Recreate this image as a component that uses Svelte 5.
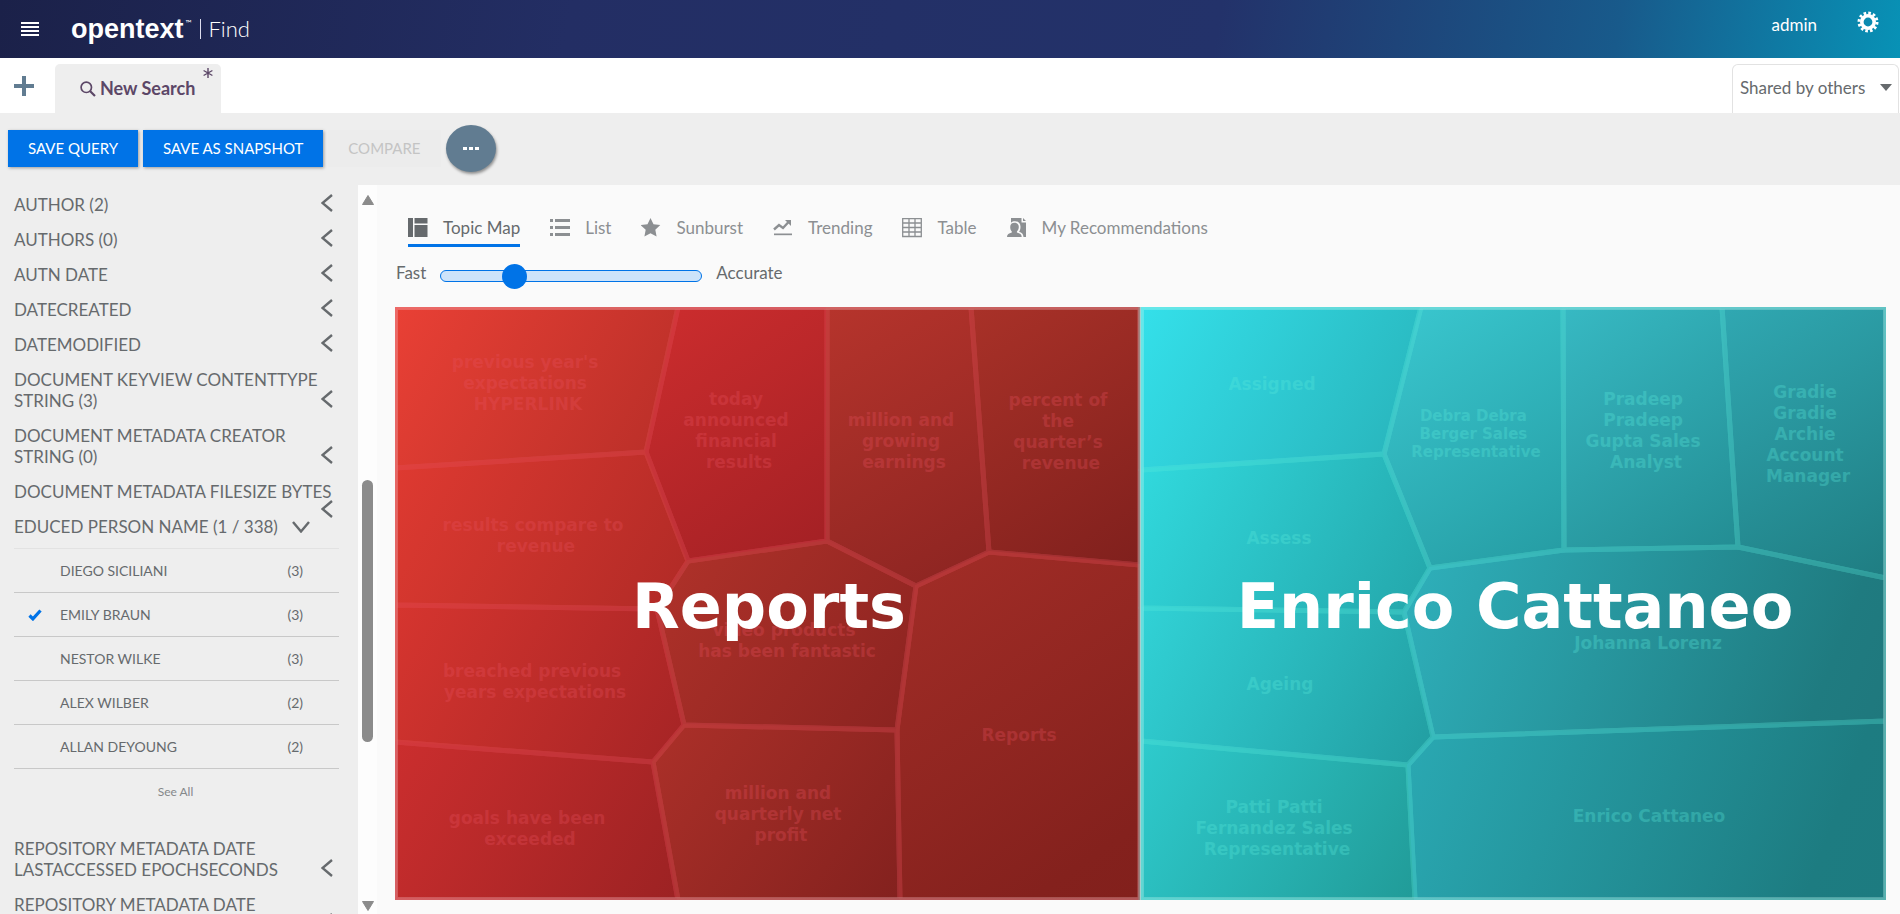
<script>
  const facets = [
    { lines: ['AUTHOR (2)'] },
    { lines: ['AUTHORS (0)'] },
    { lines: ['AUTN DATE'] },
    { lines: ['DATECREATED'] },
    { lines: ['DATEMODIFIED'] },
    { lines: ['DOCUMENT KEYVIEW CONTENTTYPE', 'STRING (3)'] },
    { lines: ['DOCUMENT METADATA CREATOR', 'STRING (0)'] },
    { lines: ['DOCUMENT METADATA FILESIZE BYTES'], dropped: true }
  ];
  const people = [
    { name: 'DIEGO SICILIANI', count: 3 },
    { name: 'EMILY BRAUN', count: 3, on: true },
    { name: 'NESTOR WILKE', count: 3 },
    { name: 'ALEX WILBER', count: 2 },
    { name: 'ALLAN DEYOUNG', count: 2 }
  ];
  const moreFacets = [
    { lines: ['REPOSITORY METADATA DATE', 'LASTACCESSED EPOCHSECONDS'] },
    { lines: ['REPOSITORY METADATA DATE'], dropped: true }
  ];
  const views = ['Topic Map', 'List', 'Sunburst', 'Trending', 'Table', 'My Recommendations'];
  let active = $state('Topic Map');
  let speed = $state(26);

  // Topic map clusters: polygon points and label anchors share one canvas.
  const clusters = [
    {
      title: 'Reports', x: 374, frame: [1.5, 742.5], tint: '#e8505e',
      cells: [
        { p: '0,0 283,0 251,145 0,161', c: ['#e94035', '#b72e28'], x: 133, y: 61, t: ["previous year's", 'expectations', 'HYPERLINK'] },
        { p: '0,161 251,145 293,254 262,302 0,298', c: ['#df3a31', '#b02a26'], x: 141, y: 224, t: ['results compare to', 'revenue'] },
        { p: '0,298 262,302 289,418 258,455 0,435', c: ['#d6352f', '#a52425'], x: 140, y: 370, t: ['breached previous', 'years expectations'] },
        { p: '0,435 258,455 283,593 0,593', c: ['#cb2e2e', '#9c2223'], x: 135, y: 517, t: ['goals have been', 'exceeded'] },
        { p: '283,0 432,0 432,234 293,254 251,145', c: ['#cd2d2e', '#a22024'], x: 344, y: 98, t: ['today', 'announced', 'financial', 'results'] },
        { p: '432,0 576,0 594,245 521,279 432,234', c: ['#b6342c', '#8b2421'], x: 509, y: 119, t: ['million and', 'growing', 'earnings'] },
        { p: '576,0 745,0 745,258 594,245', c: ['#a93128', '#80201d'], x: 666, y: 99, t: ['percent of', 'the', 'quarter’s', 'revenue'] },
        { p: '293,254 432,234 521,279 502,423 289,418 262,302', c: ['#b1322a', '#8a2320'], x: 392, y: 329, t: ['video products', 'has been fantastic'] },
        { p: '289,418 502,423 505,593 283,593 258,455', c: ['#ac3029', '#83211e'], x: 386, y: 492, t: ['million and', 'quarterly net', 'profit'] },
        { p: '594,245 745,258 745,593 505,593 502,423 521,279', c: ['#a32d27', '#84211d', '#82201c'], x: 624, y: 434, t: ['Reports'] }
      ]
    },
    {
      title: 'Enrico Cattaneo', x: 1120, frame: [747.5, 742], tint: '#5aebdc',
      cells: [
        { p: '746,0 1026,0 989,147 746,163', c: ['#34e0ea', '#28b2b9'], x: 877, y: 83, t: ['Assigned'] },
        { p: '746,163 989,147 1035,261 1009,305 746,301', c: ['#31dade', '#24a6aa'], x: 884, y: 237, t: ['Assess'] },
        { p: '746,301 1009,305 1038,430 1013,458 746,434', c: ['#31d2d6', '#229da1'], x: 885, y: 383, t: ['Ageing'] },
        { p: '746,434 1013,458 1020,593 746,593', c: ['#2ecbcd', '#219b98'], x: 882, y: 506, t: ['Patti Patti', 'Fernandez Sales', 'Representative'] },
        { p: '1026,0 1168,0 1169,243 1035,261 989,147', c: ['#3ac8d0', '#259ba2'], x: 1081, y: 114, small: true, t: ['Debra Debra', 'Berger Sales', 'Representative'] },
        { p: '1168,0 1327,0 1343,240 1169,243', c: ['#37b9c3', '#238d93'], x: 1251, y: 98, t: ['Pradeep', 'Pradeep', 'Gupta Sales', 'Analyst'] },
        { p: '1327,0 1491,0 1491,271 1343,240', c: ['#30a8b2', '#1f7d82'], x: 1413, y: 91, t: ['Gradie', 'Gradie', 'Archie', 'Account', 'Manager'] },
        { p: '1035,261 1169,243 1343,240 1491,271 1491,414 1038,430 1009,305', c: ['#2fb1bc', '#1f7b80', '#1f787d'], x: 1253, y: 342, t: ['Johanna Lorenz'] },
        { p: '1038,430 1491,414 1491,593 1020,593 1013,458', c: ['#2aa9b3', '#1d7c81', '#1d7b80'], x: 1254, y: 515, t: ['Enrico Cattaneo'] }
      ]
    }
  ];

  // Gradients run from the top-left to the bottom-right corner of each cell's bounds.
  function bounds(points) {
    const xy = points.split(' ').map((q) => q.split(',').map(Number));
    const xs = xy.map((q) => q[0]);
    const ys = xy.map((q) => q[1]);
    return { x1: Math.min(...xs), y1: Math.min(...ys), x2: Math.max(...xs), y2: Math.max(...ys) };
  }
  const offset = (n, total) => (total === 3 ? [0, 0.85, 1][n] : n);
</script>

{#snippet facet(f)}
  <button class="facet" class:dropped={f.dropped}>
    <span>{#each f.lines as l, i}{#if i}<br />{/if}{l}{/each}</span>
    <svg class="chev" viewBox="0 0 12 18" aria-hidden="true"><path d="M11 1 1.5 9 11 17" /></svg>
  </button>
{/snippet}

<div class="app">
  <header>
    <button class="burger" aria-label="Menu">
      <svg viewBox="0 0 18 14" width="18" height="14"><path d="M0 1h18M0 5h18M0 9h18M0 13h18" stroke="#fff" stroke-width="2" /></svg>
    </button>
    <div class="brand"><b>opentext</b><sup>™</sup><i></i><span>Find</span></div>
    <a class="user" href="#admin">admin</a>
    <button class="gear" aria-label="Settings">
      <svg viewBox="-11 -11 22 22" width="22" height="22">
        <circle r="6.2" fill="none" stroke="#fff" stroke-width="3.6" />
        <circle r="9" fill="none" stroke="#fff" stroke-width="3" stroke-dasharray="2.6 2.112" />
      </svg>
    </button>
  </header>

  <div class="tabs">
    <button class="plus" aria-label="New tab"><svg viewBox="0 0 20 20" width="20" height="20"><path d="M10 0v20M0 10h20" stroke="#617c91" stroke-width="4" /></svg></button>
    <button class="tab">
      <svg viewBox="0 0 16 16" width="16" height="16"><g fill="none" stroke="#5c4767"><circle cx="6.3" cy="6.3" r="5.2" stroke-width="1.7" /><path d="m10 10 5 5" stroke-width="2.2" /></g></svg>
      New Search
      <svg class="star" viewBox="0 0 10 10" width="10" height="10"><path d="M5 0v10M.6 2.5l8.8 5M9.4 2.5l-8.8 5" stroke="#5c4767" stroke-width="1.4" /></svg>
    </button>
    <div class="shared">
      <select aria-label="Shared searches"><option>Shared by others</option></select>
      <svg viewBox="0 0 12 7" width="12" height="7"><path d="M0 0h12L6 7z" fill="#666a6d" /></svg>
    </div>
  </div>

  <div class="toolbar">
    <button class="primary">SAVE QUERY</button>
    <button class="primary">SAVE AS SNAPSHOT</button>
    <button class="muted" disabled>COMPARE</button>
    <button class="more" aria-label="More"><svg viewBox="0 0 16 4" width="16" height="4"><path d="M0 0h4v3H0zM6 0h4v3H6zM12 0h4v3h-4z" fill="#fff" /></svg></button>
  </div>

  <div class="body">
    <aside>
      {#each facets as f}{@render facet(f)}{/each}
      <button class="facet open">
        <span>EDUCED PERSON NAME (1 / 338)</span>
        <svg viewBox="0 0 18 12" width="18" height="12"><path d="m1 1 8 9.5L17 1" /></svg>
      </button>
      <ul>
        {#each people as p}
          <li>
            <button>
              <span class="tick">{#if p.on}<svg viewBox="0 0 14 12" width="14" height="12"><path d="m1.5 6.500 3.400 3.400L12.500 1.500" fill="none" stroke="#0073e7" stroke-width="3.200" /></svg>{/if}</span>
              <span class="name">{p.name}</span>
              <span class="count">({p.count})</span>
            </button>
          </li>
        {/each}
      </ul>
      <button class="see">See All</button>
      {#each moreFacets as f}{@render facet(f)}{/each}
    </aside>

    <div class="scroll" aria-hidden="true">
      <svg viewBox="0 0 12 10" width="12" height="10"><path d="M6 .5 11.5 9.500h-11z" fill="#8b8b8b" stroke="#8b8b8b" stroke-linejoin="round" /></svg>
      <div class="track"><div class="thumb"></div></div>
      <svg viewBox="0 0 12 10" width="12" height="10"><path d="M6 9.500 11.500 .5h-11z" fill="#8b8b8b" stroke="#8b8b8b" stroke-linejoin="round" /></svg>
    </div>

    <main>
      <nav>
        {#each views as v}
          <button class:active={active === v} onclick={() => (active = v)}>
            <svg viewBox="0 0 20 20" width="20" height="20" fill="currentColor" aria-hidden="true">
              {#if v === 'Topic Map'}
                <path d="M0 0h5v19H0zM6.500 0H19.500v5.500H6.500zM6.500 7H19.500v12H6.500z" />
              {:else if v === 'List'}
                <path d="M0 1h3v3H0zM5 1h15v3H5zM0 8h3v3H0zM5 8h15v3H5zM0 15h3v3H0zM5 15h15v3H5z" />
              {:else if v === 'Sunburst'}
                <path d="m9.500 0 3 6.200 6.800.9-5 4.700 1.300 6.700-6.100-3.300-6.100 3.300 1.300-6.700-5-4.700 6.800-.9z" />
              {:else if v === 'Trending'}
                <path d="M1 15.500h18v1.700H1z" /><path d="m1 11.500 5-4.500 4 3 6-6.500" fill="none" stroke="currentColor" stroke-width="2.400" /><path d="M12 2h6v6z" />
              {:else if v === 'Table'}
                <path d="M.7.7h18.600v17.800H.7zM.7 5h18.600M.7 9.500h18.600M.7 14h18.600M7 .7v17.800M13 .7v17.800" fill="none" stroke="currentColor" stroke-width="1.300" />
              {:else}
                <path d="M4 0h10.500v4.500h4.500V19h-2.500c-.2-3-1.700-4.400-4.400-5.300 1-1.400 1.400-3 1.400-5C13.500 5.500 11.300 3.300 8 3.300c-1.600 0-3 .5-4 1.400zM16 0l3 3h-3z" />
                <path d="M7.500 4.800c2.700 0 4.300 1.600 4.300 4.100 0 1.900-.7 3.400-1.900 4.500v1.100c3 .8 4.800 1.700 4.800 4.500H0c0-2.800 1.800-3.700 4.800-4.500v-1.100c-1.200-1.100-1.600-2.600-1.600-4.500 0-2.500 1.600-4.100 4.300-4.100z" />
              {/if}
            </svg>
            {v}
          </button>
        {/each}
      </nav>

      <div class="speed">
        <label for="speed">Fast</label>
        <input id="speed" type="range" min="0" max="100" bind:value={speed} />
        <span>Accurate</span>
      </div>

      <svg class="map" viewBox="0 0 1491 593" role="img" aria-label="Topic map">
        {#each clusters as k, i}
          <defs>
            {#each k.cells as cell, j}
              <linearGradient id="g{i}-{j}" gradientUnits="userSpaceOnUse" {...bounds(cell.p)}>
                {#each cell.c as s, n}
                  <stop offset={offset(n, cell.c.length)} stop-color={s} />
                {/each}
              </linearGradient>
            {/each}
          </defs>
          {#each k.cells as cell, j}
            <polygon points={cell.p} fill="url(#g{i}-{j})" stroke="url(#g{i}-{j})" stroke-width="2" />
          {/each}
          <g opacity=".3">
            {#each k.cells as cell}
              <polygon points={cell.p} fill="none" stroke={k.tint} stroke-width="5" stroke-linejoin="round" />
              <text class="cell" class:small={cell.small} fill={k.tint}>
                {#each cell.t as line, n}
                  <tspan x={cell.x} y={cell.y + n * (cell.small ? 18 : 21)}>{line}{n < cell.t.length - 1 ? '\u00a0' : ''}</tspan>
                {/each}
              </text>
            {/each}
          </g>
          <rect x={k.frame[0]} y="1.500" width={k.frame[1]} height="590" fill="none" stroke="#fff" stroke-opacity=".2" stroke-width="3" />
        {/each}
        <path d="M745.500 0v593" stroke="#a9cfcf" stroke-width="1" />
        {#each clusters as k}
          <text class="title" x={k.x} y="321">{k.title}</text>
        {/each}
      </svg>
    </main>
  </div>
</div>

<style>
  :global(body) { overflow: hidden; }
  .app { height: 100vh; display: flex; flex-direction: column; background: #fafafa; color: #666a6d; font: 17px/21px Lato, "Open Sans", sans-serif; }
  button { font: inherit; color: inherit; background: none; border: 0; padding: 0; margin: 0; cursor: pointer; text-align: left; }
  svg { display: block; flex: none; }

  header { flex: none; height: 58px; display: flex; align-items: center; padding: 0 21px; color: #fff; background: linear-gradient(100deg, #1b2149 0%, #232e64 30%, #23326a 64%, #185a8b 85%, #0892b6 100%); }
  .brand { display: flex; align-items: center; margin-left: 32px; flex: 1; }
  .brand b { font: bold 27px/36px "Liberation Sans", sans-serif; }
  .brand sup { font-size: 8px; line-height: 8px; margin: -12px 8px 0 2px; }
  .brand i { width: 1px; height: 20px; background: #dde; margin-right: 8px; }
  .brand span { font-size: 22px; font-weight: 300; line-height: 28px; }
  .user { color: #fff; text-decoration: none; margin-right: 40px; margin-top: -10px; }
  .gear { margin-top: -14px; }

  .tabs { flex: none; height: 55px; display: flex; align-items: flex-end; background: #fff; }
  .plus { align-self: center; padding: 0 21px 0 14px; }
  .tab { position: relative; height: 49px; display: flex; align-items: center; gap: 4px; padding: 0 26px 0 25px; background: #eee; border-radius: 5px 5px 0 0; font-size: 18px; font-weight: bold; color: #5c4767; }
  .star { position: absolute; top: 4px; right: 8px; }
  .shared { position: relative; margin: 0 1px 0 auto; border: 1px solid #e2e2e2; border-bottom: 0; border-radius: 6px 6px 0 0; height: 48px; display: flex; align-items: center; }
  .shared select { appearance: none; border: 0; background: none; font: inherit; color: inherit; padding: 0 32px 4px 7px; height: 48px; }
  .shared svg { position: absolute; right: 6px; top: 19px; pointer-events: none; }

  .toolbar { flex: none; height: 72px; box-sizing: border-box; display: flex; align-items: center; gap: 5px; padding: 0 8px 1px; background: #eee; font-size: 15px; }
  .primary, .muted { height: 37px; padding: 0 20px; }
  .primary { background: #0073e7; color: #fff; box-shadow: 1px 1px 3px rgb(0 0 0 / .35); }
  .muted { color: #c4c4c4; background: #ececec; }
  .more { width: 50px; height: 47px; border-radius: 50%; background: #617c91; display: grid; place-items: center; box-shadow: 1px 2px 3px rgb(0 0 0 / .4); }

  .body { flex: 1; min-height: 0; display: flex; }
  aside { flex: none; width: 358px; box-sizing: border-box; padding: 2px 19px 0 14px; background: #eee; overflow: hidden; }
  .facet { position: relative; width: 100%; display: flex; justify-content: space-between; align-items: flex-end; padding: 7px 6px 7px 0; white-space: nowrap; }
  .facet path { fill: none; stroke: #666a6d; stroke-width: 2.4; }
  .chev { width: 12px; height: 18px; margin-bottom: 3px; }
  .dropped .chev { position: absolute; right: 6px; top: 26px; margin: 0; }
  .open { padding-right: 29px; align-items: center; }
  ul { list-style: none; margin: 4px 0 0; padding: 0; border-top: 1px solid #e2e2e2; font-size: 14px; }
  li { border-bottom: 1px solid #c8c8c8; }
  li button { width: 100%; height: 43px; display: flex; align-items: center; }
  .tick { width: 32px; padding-left: 14px; }
  .name { flex: 1; }
  .count { padding-right: 36px; }
  .see { display: block; width: 100%; text-align: center; font-size: 12px; padding: 12px 2px 29px 0; color: #85888a; }

  .scroll { flex: none; width: 19px; background: #fdfdfd; display: flex; flex-direction: column; align-items: center; padding: 10px 0 3px; }
  .track { flex: 1; width: 11px; display: flex; flex-direction: column; padding-top: 275px; }
  .thumb { border-radius: 6px; background: #8b8b8b; flex: 0 0 262px; }

  main { flex: 1; min-width: 0; padding: 32px 14px 0 18px; }
  nav { display: flex; gap: 30px; padding-left: 13px; color: #8c8f92; }
  nav button { display: flex; align-items: center; gap: 15px; height: 30px; border-bottom: 3px solid transparent; padding-bottom: 6px; }
  nav .active { color: #666a6d; border-color: #0073e7; }
  .speed { display: flex; align-items: center; gap: 14px; margin-top: 15px; padding: 0 0 17px 1px; height: 28px; }
  .speed label, .speed span { padding-bottom: 7px; }
  input { appearance: none; width: 262px; height: 12px; margin: 0; box-sizing: border-box; border: 1px solid #0073e7; border-radius: 6px; background: #cde3fa; }
  input::-webkit-slider-thumb { appearance: none; width: 25px; height: 25px; border-radius: 50%; background: #0073e7; }
  .map { width: 100%; height: auto; overflow: hidden; }
  .map text { font-family: "DejaVu Sans", Verdana, sans-serif; font-weight: bold; text-anchor: middle; }
  .cell { font-size: 17px; }
  .small { font-size: 15px; }
  .title { font-size: 62px; fill: #fff; }
</style>
